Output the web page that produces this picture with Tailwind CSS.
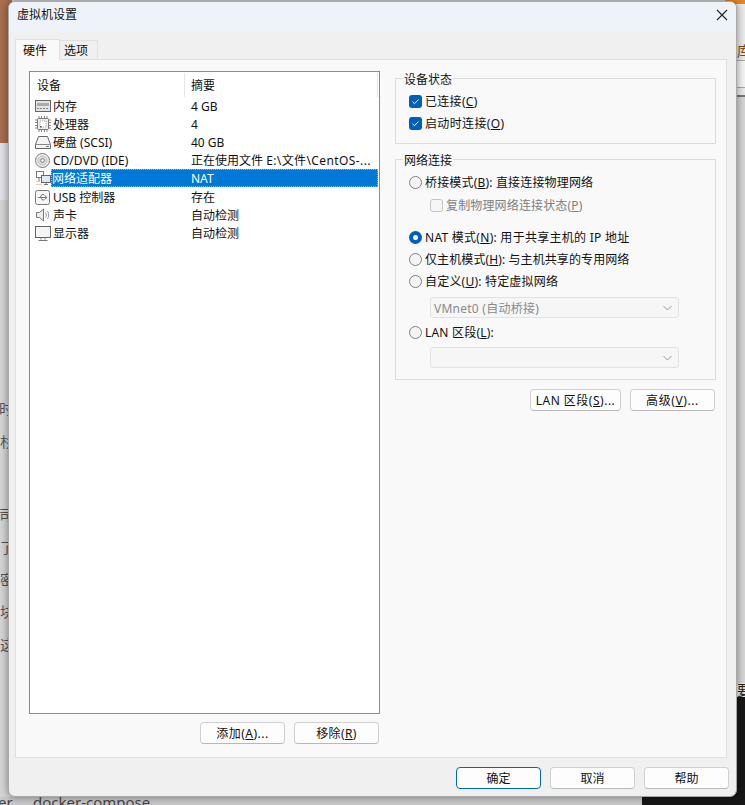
<!DOCTYPE html>
<html lang="zh-CN">
<head>
<meta charset="utf-8">
<script src="https://cdn.jsdelivr.net/npm/@tailwindcss/browser@4"></script>
</head>
<body class="m-0 overflow-hidden">
<div class="relative w-[745px] h-[805px] overflow-hidden bg-[#d6d6d6] text-[12px] leading-[18px] text-[#111] font-['Noto_Sans','Noto_Sans_CJK_SC',sans-serif]">

  <!-- desktop behind the dialog -->
  <div class="absolute left-0 top-0 w-[12px] h-[143px] bg-[#a96f4e]"></div>
  <div class="absolute left-0 top-[143px] w-[12px] h-[57px] bg-[#e4e2ea]"></div>
  <div class="absolute left-[725px] top-[3px] w-[20px] h-[93px] bg-[#ececec]"></div>
  <div class="absolute left-[725px] top-0 w-[20px] h-[4px] bg-[#e8871e]"></div>
  <div class="absolute left-[725px] top-[60px] w-[20px] h-[28px] bg-[#f5f5f5] border-y border-[#aaa]"></div>
  <div class="absolute left-[725px] top-[95px] w-[20px] h-[2px] bg-[#777]"></div>
  <div class="absolute left-[725px] top-[683px] w-[20px] h-[14px] bg-[#ececec]"></div>
  <div class="absolute left-[725px] top-[697px] w-[20px] h-[108px] bg-[#171717]"></div>
  <div class="absolute left-0 top-[797px] w-[642px] h-[8px] bg-[#c9c9c9]"></div>
  <div class="absolute left-[642px] top-[797px] w-[103px] h-[8px] bg-[#171717]"></div>
  <span class="absolute left-[737px] top-[42px] text-[14px] text-[#7a4a20]">库</span>
  <span class="absolute left-[737px] top-[681px] text-[14px] text-[#222]">要</span>
  <span class="absolute left-[-1px] top-[400px] text-[14px] text-[#555]">时</span>
  <span class="absolute left-0 top-[433px] text-[14px] text-[#555]">杉</span>
  <span class="absolute left-[-1px] top-[506px] text-[14px] text-[#555]">司</span>
  <span class="absolute left-0 top-[539px] text-[14px] text-[#555]">了</span>
  <span class="absolute left-0 top-[571px] text-[14px] text-[#555]">密</span>
  <span class="absolute left-0 top-[603px] text-[14px] text-[#555]">块</span>
  <span class="absolute left-0 top-[636px] text-[14px] text-[#555]">这</span>
  <span class="absolute left-[-2px] top-[793px] text-[15px] text-[#444]">er</span>
  <span class="absolute left-[33px] top-[793px] text-[15px] text-[#444]">docker-compose</span>

  <!-- dialog -->
  <div class="absolute left-[8px] top-[1px] w-[729px] h-[796px] flex flex-col bg-[#f0f0f0] rounded-[7px] overflow-hidden border border-[#a8a8a8] shadow-[0_0_8px_rgba(0,0,0,0.45)]">
    <div class="h-[30px] shrink-0 flex items-center justify-between pl-[8px] pr-[7px] pb-[4px] bg-[#eef3f9]">
      <span class="text-[12px]">虚拟机设置</span>
      <svg width="12" height="12" viewBox="0 0 12 12" class="mr-[1px]"><path d="M1 1 11 11M11 1 1 11" stroke="#222" stroke-width="1.1" fill="none"/></svg>
    </div>

    <div class="flex-1 flex flex-col pl-[6px] pr-[9px]">
      <!-- tabs -->
      <div class="h-[28px] shrink-0 flex items-end relative z-10">
        <div class="w-[45px] h-[21px] bg-[#f9f9f9] border border-b-0 border-[#dfdfdf] flex items-center pl-[7px]"><span class="pt-[2px]">硬件</span></div>
        <div class="w-[38px] h-[19px] mb-[1px] bg-[#f0f0f0] border border-b-0 border-l-0 border-[#dfdfdf] flex items-center pl-[4px]"><span class="pt-[2px]">选项</span></div>
      </div>

      <!-- tab panel -->
      <div class="w-[712px] h-[699px] -mt-[1px] bg-[#f9f9f9] border border-[#dfdfdf] flex pl-[13px] pt-[11px] gap-[15px]">
        <!-- left column -->
        <div class="w-[351px] flex flex-col">
          <div class="h-[643px] bg-white border border-[#8b8b96] flex flex-col">
            <div class="h-[25px] flex items-center shrink-0">
              <div class="w-[155px] h-[24px] border-r border-[#e6e6e6] pl-[7px] flex items-center"><span class="pt-[2px]">设备</span></div>
              <div class="flex-1 h-[24px] border-r border-[#e6e6e6] pl-[6px] flex items-center"><span class="pt-[2px]">摘要</span></div>
              <div class="w-[1px]"></div>
            </div>

            <div class="h-[18px] flex items-center">
              <div class="w-[21px] pl-[5px] shrink-0">
                <svg class="block" width="16" height="12" viewBox="0 0 16 12"><rect x=".5" y=".5" width="15" height="11" fill="#e4e4e4" stroke="#666"/><rect x="2" y="3" width="12" height="3" fill="#aaa"/><path d="M2 8.500h12" stroke="#888" stroke-dasharray="2 1"/></svg>
              </div>
              <div class="w-[134px] pl-[2px] pt-[2px]">内存</div><div class="pl-[6px] pt-[2px]">4 GB</div>
            </div>
            <div class="h-[18px] flex items-center">
              <div class="w-[21px] pl-[5px] shrink-0">
                <svg class="block" width="16" height="16" viewBox="0 0 16 16"><path d="M4 0v16M6.500 0v16M9.500 0v16M12 0v16M0 4h16M0 6.500h16M0 9.500h16M0 12h16" stroke="#888"/><rect x="2.500" y="2.500" width="11" height="11" rx="1" fill="#eee" stroke="#777"/><rect x="5" y="5" width="6" height="6" fill="#fff" stroke="#aaa" stroke-dasharray="1 1"/><rect x="5" y="10" width="1.500" height="1.500" fill="#555"/></svg>
              </div>
              <div class="w-[134px] pl-[2px] pt-[2px]">处理器</div><div class="pl-[6px] pt-[2px]">4</div>
            </div>
            <div class="h-[18px] flex items-center">
              <div class="w-[21px] pl-[5px] shrink-0">
                <svg class="block" width="16" height="13" viewBox="0 0 16 13"><path d="M3.500.5h9l3 8v4H.5v-4z" fill="#f4f4f4" stroke="#666"/><path d="M1 8.500h14" stroke="#888"/><path d="M11 10.500h3" stroke="#777"/></svg>
              </div>
              <div class="w-[134px] pl-[2px] pt-[2px]">硬盘 (SCSI)</div><div class="pl-[6px] pt-[2px]">40 GB</div>
            </div>
            <div class="h-[18px] flex items-center">
              <div class="w-[21px] pl-[5px] shrink-0">
                <svg class="block" width="15" height="15" viewBox="0 0 15 15"><circle cx="7.500" cy="7.500" r="7" fill="#f0f0f0" stroke="#777"/><circle cx="7.500" cy="7.500" r="4.500" fill="#dcdcdc" stroke="#bbb"/><circle cx="7.500" cy="7.500" r="1.800" fill="#fff" stroke="#777"/></svg>
              </div>
              <div class="w-[134px] pl-[2px] pt-[2px]">CD/DVD (IDE)</div><div class="pl-[6px] pt-[2px] whitespace-nowrap">正在使用文件 <span class="tracking-[0.4px]">E:\文件\CentOS-...</span></div>
            </div>
            <div class="h-[18px] flex items-center">
              <div class="w-[21px] pl-[6px] shrink-0">
                <svg class="block" width="15" height="15" viewBox="0 0 15 15"><rect x=".5" y=".5" width="7" height="6" fill="#fff" stroke="#777"/><rect x="5.500" y="4.500" width="9" height="7" fill="#dbe9f6" stroke="#666"/><path d="M3 7v3M8 13.500h4M10 12v1" stroke="#777"/><path d="M.5 10.500h4M.5 13.500h5" stroke="#c89a60" stroke-dasharray="1 1"/></svg>
              </div>
              <div class="flex-1 mr-[1px] h-[18px] flex items-center bg-[#0078d7] text-white outline-1 -outline-offset-1 outline-dotted outline-[#e8a060]">
                <div class="w-[134px] pl-[1px] pt-[2px] shrink-0">网络适配器</div><div class="pl-[6px] pt-[2px]">NAT</div>
              </div>
            </div>
            <div class="h-[18px] mt-[1px] flex items-center">
              <div class="w-[21px] pl-[5px] shrink-0">
                <svg class="block" width="15" height="15" viewBox="0 0 15 15"><rect x=".5" y=".5" width="14" height="14" rx="2" fill="#f6f6f6" stroke="#777"/><path d="M3 7.500h9M9.500 5.500l2.500 2-2.500 2M5 7.500 7 4.500h2M6 7.500l1.500 2.500H9" stroke="#777" fill="none"/></svg>
              </div>
              <div class="w-[134px] pl-[2px] pt-[2px]">USB 控制器</div><div class="pl-[6px] pt-[2px]">存在</div>
            </div>
            <div class="h-[18px] flex items-center">
              <div class="w-[21px] pl-[6px] shrink-0">
                <svg class="block" width="14" height="14" viewBox="0 0 14 14"><path d="M.5 4.500h3l4-3.500v12l-4-3.500h-3z" fill="#eee" stroke="#777"/><path d="M9.500 4.500c1 1.500 1 3.500 0 5M11.500 3c1.500 2.500 1.500 5.500 0 8" stroke="#999" fill="none"/></svg>
              </div>
              <div class="w-[134px] pl-[2px] pt-[2px]">声卡</div><div class="pl-[6px] pt-[2px]">自动检测</div>
            </div>
            <div class="h-[18px] flex items-center">
              <div class="w-[21px] pl-[5px] shrink-0">
                <svg class="block" width="16" height="15" viewBox="0 0 16 15"><rect x=".5" y=".5" width="15" height="11" fill="#f4f4f4" stroke="#666"/><path d="M6 12v1.500M3.500 14.500h9M10 12v1.500" stroke="#777"/></svg>
              </div>
              <div class="w-[134px] pl-[2px] pt-[2px]">显示器</div><div class="pl-[6px] pt-[2px]">自动检测</div>
            </div>
          </div>

          <div class="flex justify-end gap-[9px] mt-[8px] pr-[1px]">
            <div class="w-[85px] h-[22px] flex items-center justify-center bg-[#fdfdfd] border border-[#d0d0d0] border-b-[#b8b8b8] rounded-[4px]"><span class="pt-[2px] tracking-[0.5px]">添加(<u>A</u>)...</span></div>
            <div class="w-[85px] h-[22px] flex items-center justify-center bg-[#fdfdfd] border border-[#d0d0d0] border-b-[#b8b8b8] rounded-[4px]"><span class="pt-[2px] tracking-[0.4px]">移除(<u>R</u>)</span></div>
          </div>
        </div>

        <!-- right column -->
        <div class="w-[321px] pt-[7px] flex flex-col">
          <div class="relative h-[66px] border border-[#dcdcdc] pl-[13px] pt-[11px]">
            <span class="absolute left-[7px] -top-[8px] px-[1px] bg-[#f9f9f9]">设备状态</span>
            <div class="h-[22px] flex items-center gap-[3px]">
              <svg class="block" width="13" height="13" viewBox="0 0 13 13"><rect width="13" height="13" rx="3" fill="#005fb8"/><path d="M3.500 6.800 5.500 8.700 9.500 4.500" stroke="#fff" fill="none"/></svg>
              <span class="pt-[2px] tracking-[0.3px]">已连接(<u>C</u>)</span>
            </div>
            <div class="h-[22px] flex items-center gap-[3px]">
              <svg class="block" width="13" height="13" viewBox="0 0 13 13"><rect width="13" height="13" rx="3" fill="#005fb8"/><path d="M3.500 6.800 5.500 8.700 9.500 4.500" stroke="#fff" fill="none"/></svg>
              <span class="pt-[2px] tracking-[0.35px]">启动时连接(<u>O</u>)</span>
            </div>
          </div>

          <div class="relative h-[221px] mt-[15px] border border-[#dcdcdc] pl-[13px] pt-[11px] flex flex-col">
            <span class="absolute left-[7px] -top-[8px] px-[1px] bg-[#f9f9f9]">网络连接</span>
            <div class="h-[22px] flex items-center gap-[3px]">
              <div class="w-[13px] h-[13px] rounded-full border border-[#808080] bg-[#f4f4f4]"></div>
              <span class="pt-[2px] tracking-[0.17px]">桥接模式(<u>B</u>): 直接连接物理网络</span>
            </div>
            <div class="h-[22px] mt-[1px] ml-[21px] flex items-center gap-[3px] text-[#808080]">
              <div class="w-[13px] h-[13px] rounded-[3px] border border-[#c4c4c4] bg-[#f6f6f6]"></div>
              <span class="pt-[2px] tracking-[0.15px]">复制物理网络连接状态(<u>P</u>)</span>
            </div>
            <div class="h-[22px] mt-[10px] flex items-center gap-[3px]">
              <div class="w-[13px] h-[13px] rounded-full bg-[#005fb8] flex items-center justify-center"><div class="w-[5px] h-[5px] rounded-full bg-white"></div></div>
              <span class="pt-[2px] tracking-[0.27px]">NAT 模式(<u>N</u>): 用于共享主机的 IP 地址</span>
            </div>
            <div class="h-[22px] flex items-center gap-[3px]">
              <div class="w-[13px] h-[13px] rounded-full border border-[#808080] bg-[#f4f4f4]"></div>
              <span class="pt-[2px] tracking-[0.1px]">仅主机模式(<u>H</u>): 与主机共享的专用网络</span>
            </div>
            <div class="h-[22px] flex items-center gap-[3px]">
              <div class="w-[13px] h-[13px] rounded-full border border-[#808080] bg-[#f4f4f4]"></div>
              <span class="pt-[2px] tracking-[0.2px]">自定义(<u>U</u>): 特定虚拟网络</span>
            </div>
            <div class="w-[249px] h-[21px] mt-[5px] ml-[21px] flex items-center justify-between pl-[3px] pr-[6px] bg-[#f6f6f6] border border-[#e2e2e2] rounded-[3px] text-[#8a8a8a]">
              <span class="pt-[2px] tracking-[0.25px]">VMnet0 (自动桥接)</span>
              <svg width="9" height="6" viewBox="0 0 9 6"><path d="M.5 1 4.500 5 8.500 1" stroke="#999" fill="none"/></svg>
            </div>
            <div class="h-[22px] mt-[3px] flex items-center gap-[3px]">
              <div class="w-[13px] h-[13px] rounded-full border border-[#808080] bg-[#f4f4f4]"></div>
              <span class="pt-[2px] tracking-[0.2px]">LAN 区段(<u>L</u>):</span>
            </div>
            <div class="w-[249px] h-[21px] mt-[4px] ml-[21px] flex items-center justify-end pr-[6px] bg-[#f6f6f6] border border-[#e2e2e2] rounded-[3px]">
              <svg width="9" height="6" viewBox="0 0 9 6"><path d="M.5 1 4.500 5 8.500 1" stroke="#999" fill="none"/></svg>
            </div>
          </div>

          <div class="flex justify-end gap-[9px] mt-[9px] pr-[1px]">
            <div class="w-[91px] h-[22px] flex items-center justify-center bg-[#fdfdfd] border border-[#d0d0d0] border-b-[#b8b8b8] rounded-[4px]"><span class="pt-[2px] tracking-[0.5px]">LAN 区段(<u>S</u>)...</span></div>
            <div class="w-[85px] h-[22px] flex items-center justify-center bg-[#fdfdfd] border border-[#d0d0d0] border-b-[#b8b8b8] rounded-[4px]"><span class="pt-[2px] tracking-[0.6px]">高级(<u>V</u>)...</span></div>
          </div>
        </div>
      </div>

      <!-- footer buttons -->
      <div class="flex justify-end gap-[9px] mt-[9px] -mr-[2px]">
        <div class="w-[85px] h-[22px] flex items-center justify-center bg-[#fdfdfd] border-[1.5px] border-[#0067c0] rounded-[4px]"><span class="pt-[2px]">确定</span></div>
        <div class="w-[85px] h-[22px] flex items-center justify-center bg-[#fdfdfd] border border-[#d0d0d0] border-b-[#b8b8b8] rounded-[4px]"><span class="pt-[2px]">取消</span></div>
        <div class="w-[85px] h-[22px] flex items-center justify-center bg-[#fdfdfd] border border-[#d0d0d0] border-b-[#b8b8b8] rounded-[4px]"><span class="pt-[2px]">帮助</span></div>
      </div>
    </div>
  </div>
</div>
</body>
</html>
